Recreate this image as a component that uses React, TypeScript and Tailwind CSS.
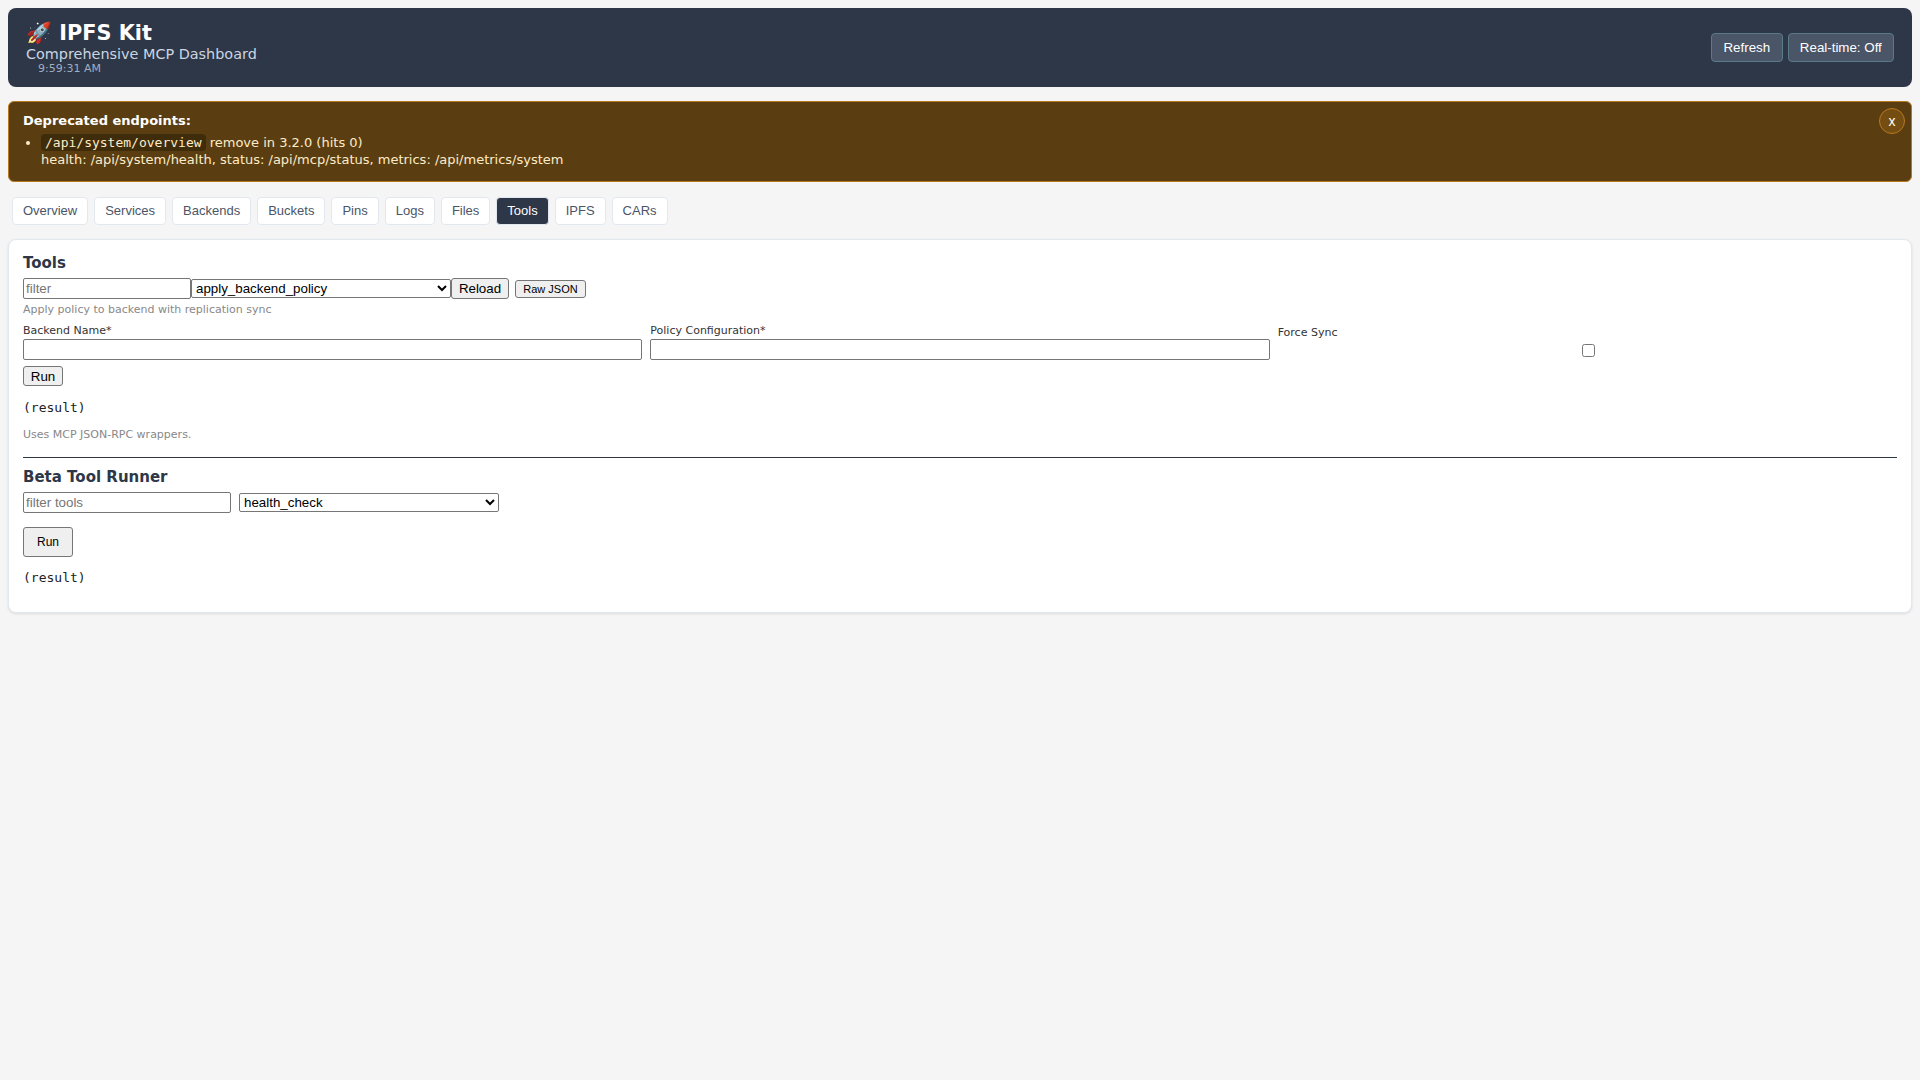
const sans = "font-['DejaVu_Sans',sans-serif]";
const arial = "font-['Liberation_Sans',Arial,sans-serif]";
const mono = "font-['DejaVu_Sans_Mono',monospace]";

const tabs = ["Overview", "Services", "Backends", "Buckets", "Pins", "Logs", "Files", "Tools", "IPFS", "CARs"];

const inputClass =
  "border border-[#767676] rounded-[2px] bg-white text-[13.33px] text-black px-[2px] placeholder:text-[#757575] " + arial;
const selectClass =
  "border border-[#767676] rounded-[2px] bg-white text-[13.33px] text-black " + arial;
const buttonClass =
  "border border-[#767676] rounded-[3px] bg-[#efefef] text-black " + arial;

export default function App() {
  return (
    <div className={`min-h-screen bg-[#f5f5f5] p-2 ${sans}`}>
      <header className="flex items-center justify-between h-[79px] rounded-lg bg-[#2d3748] pl-[18px] pr-[18px]">
        <div>
          <h1 className="text-[20.8px] leading-[26px] font-bold text-white">🚀 IPFS Kit</h1>
          <p className="text-[14.4px] leading-[17px] text-[#cbd5e0]">Comprehensive MCP Dashboard</p>
          <p className="ml-3 text-[11px] leading-[12px] text-[#a0aec0]">9:59:31 AM</p>
        </div>
        <div className="flex gap-[5px]">
          <button className={`h-[29px] px-[11.5px] rounded border border-[#5a7a8c] bg-[#4a5568] text-[13.33px] text-white ${arial}`}>
            Refresh
          </button>
          <button className={`h-[29px] px-[11.2px] rounded border border-[#5a7a8c] bg-[#4a5568] text-[13.33px] text-white ${arial}`}>
            Real-time: Off
          </button>
        </div>
      </header>

      <section className="relative mt-[14px] h-[81px] rounded-md border border-[#b7791f] bg-[#5a3e11] pl-[14px] pt-[10px] text-[13px] text-[#feebc8]">
        <strong className="block text-[13px] leading-[17px] text-white font-bold">Deprecated endpoints:</strong>
        <ul className="mt-[5px] list-disc pl-[18px]">
          <li className="leading-[17px]">
            <code className={`rounded bg-[#3f2c0b] px-1 py-[1px] text-[13px] ${mono}`}>/api/system/overview</code> remove in 3.2.0 (hits 0)
            <br />
            health: /api/system/health, status: /api/mcp/status, metrics: /api/metrics/system
          </li>
        </ul>
        <button className={`absolute right-[6px] top-[6px] flex h-[26px] w-[26px] items-center justify-center rounded-full border border-[#b7791f] bg-[#744d12] text-[14px] text-white ${arial}`}>
          x
        </button>
      </section>

      <nav className="mt-[15px] ml-1 flex gap-[6px]">
        {tabs.map((t) =>
          t === "Tools" ? (
            <button key={t} className={`h-7 px-[10px] rounded border border-[#e2e8f0] bg-[#2d3748] text-[13px] text-white ${arial}`}>
              {t}
            </button>
          ) : (
            <button key={t} className={`h-7 px-[10px] rounded border border-[#e2e8f0] bg-white text-[13px] text-[#4a5568] ${arial}`}>
              {t}
            </button>
          )
        )}
      </nav>

      <main className="mt-[14px] h-[374px] rounded-lg border border-[#e2e8f0] bg-white pl-[14px] pr-[14px] pt-[14px] shadow-[0_1px_3px_rgba(0,0,0,0.1)]">
        <h2 className="text-[15px] leading-[19px] font-bold text-[#2d3748]">Tools</h2>
        <div className="mt-[5px] flex items-center">
          <input placeholder="filter" className={`${inputClass} h-[21px] w-[168px]`} />
          <select defaultValue="apply_backend_policy" className={`${selectClass} h-[19px] w-[260px]`}>
            <option>apply_backend_policy</option>
          </select>
          <button className={`${buttonClass} h-[21px] w-[58px] text-[13.33px]`}>Reload</button>
          <button className={`${buttonClass} ml-[6px] h-[18px] w-[71px] text-[11px]`}>Raw JSON</button>
        </div>
        <p className="mt-[4px] text-[11px] leading-[13px] text-[#888888]">Apply policy to backend with replication sync</p>
        <div className="mt-[8px] grid grid-cols-3 gap-2">
          <label className="flex flex-col">
            <span className="text-[11px] leading-[13px] text-[#333333]">Backend Name*</span>
            <input className={`${inputClass} mt-[2px] h-[21px]`} />
          </label>
          <label className="flex flex-col">
            <span className="text-[11px] leading-[13px] text-[#333333]">Policy Configuration*</span>
            <input className={`${inputClass} mt-[2px] h-[21px]`} />
          </label>
          <label className="flex flex-col pt-[2px]">
            <span className="text-[11px] leading-[13px] text-[#333333]">Force Sync</span>
            <input type="checkbox" className="mt-[5px] ml-[3px] h-[13px] w-[13px] self-center appearance-auto" />
          </label>
        </div>
        <button className={`${buttonClass} mt-[6px] block h-5 w-10 text-[13.33px]`}>Run</button>
        <pre className={`mt-[15px] text-[13px] leading-[14px] text-[#222222] ${mono}`}>(result)</pre>
        <p className="mt-[13px] text-[11px] leading-[13px] text-[#888888]">Uses MCP JSON-RPC wrappers.</p>
        <hr className="mt-4 border-t border-[#2d3748]" />
        <h2 className="mt-[10px] text-[15px] leading-[19px] font-bold text-[#2d3748]">Beta Tool Runner</h2>
        <div className="mt-[5px] flex items-center gap-2">
          <input placeholder="filter tools" className={`${inputClass} h-[21px] w-[208px]`} />
          <select defaultValue="health_check" className={`${selectClass} h-[19px] w-[260px]`}>
            <option>health_check</option>
          </select>
        </div>
        <button className={`${buttonClass} mt-[14px] block h-[30px] w-[50px] text-[12px]`}>Run</button>
        <pre className={`mt-[14px] text-[13px] leading-[14px] text-[#222222] ${mono}`}>(result)</pre>
      </main>
    </div>
  );
}
